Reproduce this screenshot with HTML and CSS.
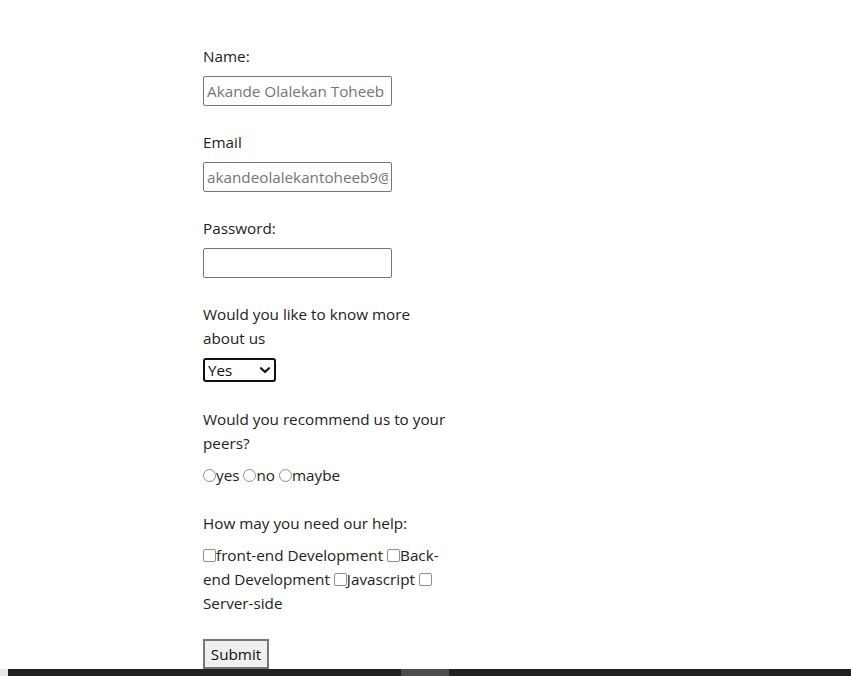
FILE: index.html
```html
<!DOCTYPE html>
<html lang="en">
<head>
<meta charset="utf-8">
<title>Form</title>
<link rel="stylesheet" href="styles.css">
</head>
<body>
<form class="form">
  <div class="field field-input">
    <label class="label" for="name">Name:</label>
    <input class="text-input" id="name" type="text" placeholder="Akande Olalekan Toheeb">
  </div>
  <div class="field field-input">
    <label class="label" for="email">Email</label>
    <input class="text-input" id="email" type="email" placeholder="akandeolalekantoheeb9@gmail.com">
  </div>
  <div class="field field-input">
    <label class="label" for="pw">Password:</label>
    <input class="text-input" id="pw" type="password">
  </div>
  <div class="field">
    <label class="label" for="more">Would you like to know more about us</label>
    <div class="select-wrap">
      <select class="select" id="more">
        <option>Yes</option>
        <option>No</option>
      </select>
      <svg class="chevron" width="10" height="7" viewBox="0 0 10 7"><path d="M1 1.2 L5 5 L9 1.2" fill="none" stroke="#111" stroke-width="2.2" stroke-linecap="round" stroke-linejoin="round"/></svg>
    </div>
  </div>
  <div class="field field-tight">
    <p class="label">Would you recommend us to your peers?</p>
    <div class="options"><label class="opt"><input class="radio" type="radio" name="rec">yes</label> <label class="opt"><input class="radio" type="radio" name="rec">no</label> <label class="opt"><input class="radio" type="radio" name="rec">maybe</label></div>
  </div>
  <div class="field">
    <p class="label label-gap">How may you need our help:</p>
    <div class="options"><label class="opt"><input class="check" type="checkbox">front-end Development</label> <label><input class="check" type="checkbox">Back-end Development</label> <label class="opt"><input class="check" type="checkbox">Javascript</label> <label><input class="check" type="checkbox"> Server-side</label></div>
  </div>
  <button class="submit" type="button">Submit</button>
</form>
<div class="bottom-bar"><span class="grip"></span></div>
</body>
</html>
```

FILE: styles.css
```css
html, body {
  margin: 0;
  padding: 0;
  background: #ffffff;
}

body {
  font-family: "Open Sans", "Noto Sans", sans-serif;
  font-size: 15.25px;
  line-height: 24px;
  color: #222222;
}

.form {
  width: 247px;
  padding: 44px 0 0 203px;
}

.field {
  margin-bottom: 25px;
}

.field-input {
  margin-bottom: 24px;
}

.field-tight {
  margin-bottom: 24px;
}

.label {
  display: block;
  margin: 0 0 7px 0;
}

.label-gap {
  margin-bottom: 8px;
}

.text-input {
  box-sizing: border-box;
  display: block;
  width: 189px;
  height: 30px;
  margin: 8px 0 0 0;
  padding: 0 3px;
  border: 1px solid #767676;
  border-radius: 2px;
  font-family: inherit;
  font-size: 15.25px;
  color: #222;
  background: #fff;
}

.text-input::placeholder {
  color: #757575;
}

.select-wrap {
  position: relative;
  width: 73px;
  height: 24px;
  margin-top: 8px;
}

.select {
  appearance: none;
  -webkit-appearance: none;
  box-sizing: border-box;
  width: 73px;
  height: 24px;
  margin: 0;
  padding: 0 0 0 3px;
  border: 2px solid #101010;
  border-radius: 3px;
  background: #fff;
  font-family: inherit;
  font-size: 15.25px;
  color: #111;
  line-height: 20px;
}

.chevron {
  position: absolute;
  right: 6px;
  top: 9px;
  pointer-events: none;
}

.options {
  margin-top: 8px;
}

.opt {
  white-space: nowrap;
}

.radio,
.check {
  appearance: none;
  -webkit-appearance: none;
  box-sizing: border-box;
  width: 13px;
  height: 13px;
  margin: 0;
  border: 1px solid #8f8f8f;
  background: #fff;
  vertical-align: -1px;
}

.radio {
  border-radius: 50%;
}

.check {
  border-radius: 2px;
}

.submit {
  box-sizing: border-box;
  display: block;
  width: 66px;
  height: 30px;
  margin: -1px 0 0 0;
  padding: 0;
  border: 2px solid #767676;
  border-radius: 0;
  background: #efefef;
  font-family: inherit;
  font-size: 15.25px;
  color: #111;
}

.bottom-bar {
  position: fixed;
  left: 0;
  right: 0;
  bottom: 0;
  height: 7px;
  background: #202124;
  border-left: 8px solid #e8e8e8;
}

.grip {
  position: absolute;
  left: 393px;
  top: 0;
  width: 48px;
  height: 7px;
  background: #4b4b50;
}
```
